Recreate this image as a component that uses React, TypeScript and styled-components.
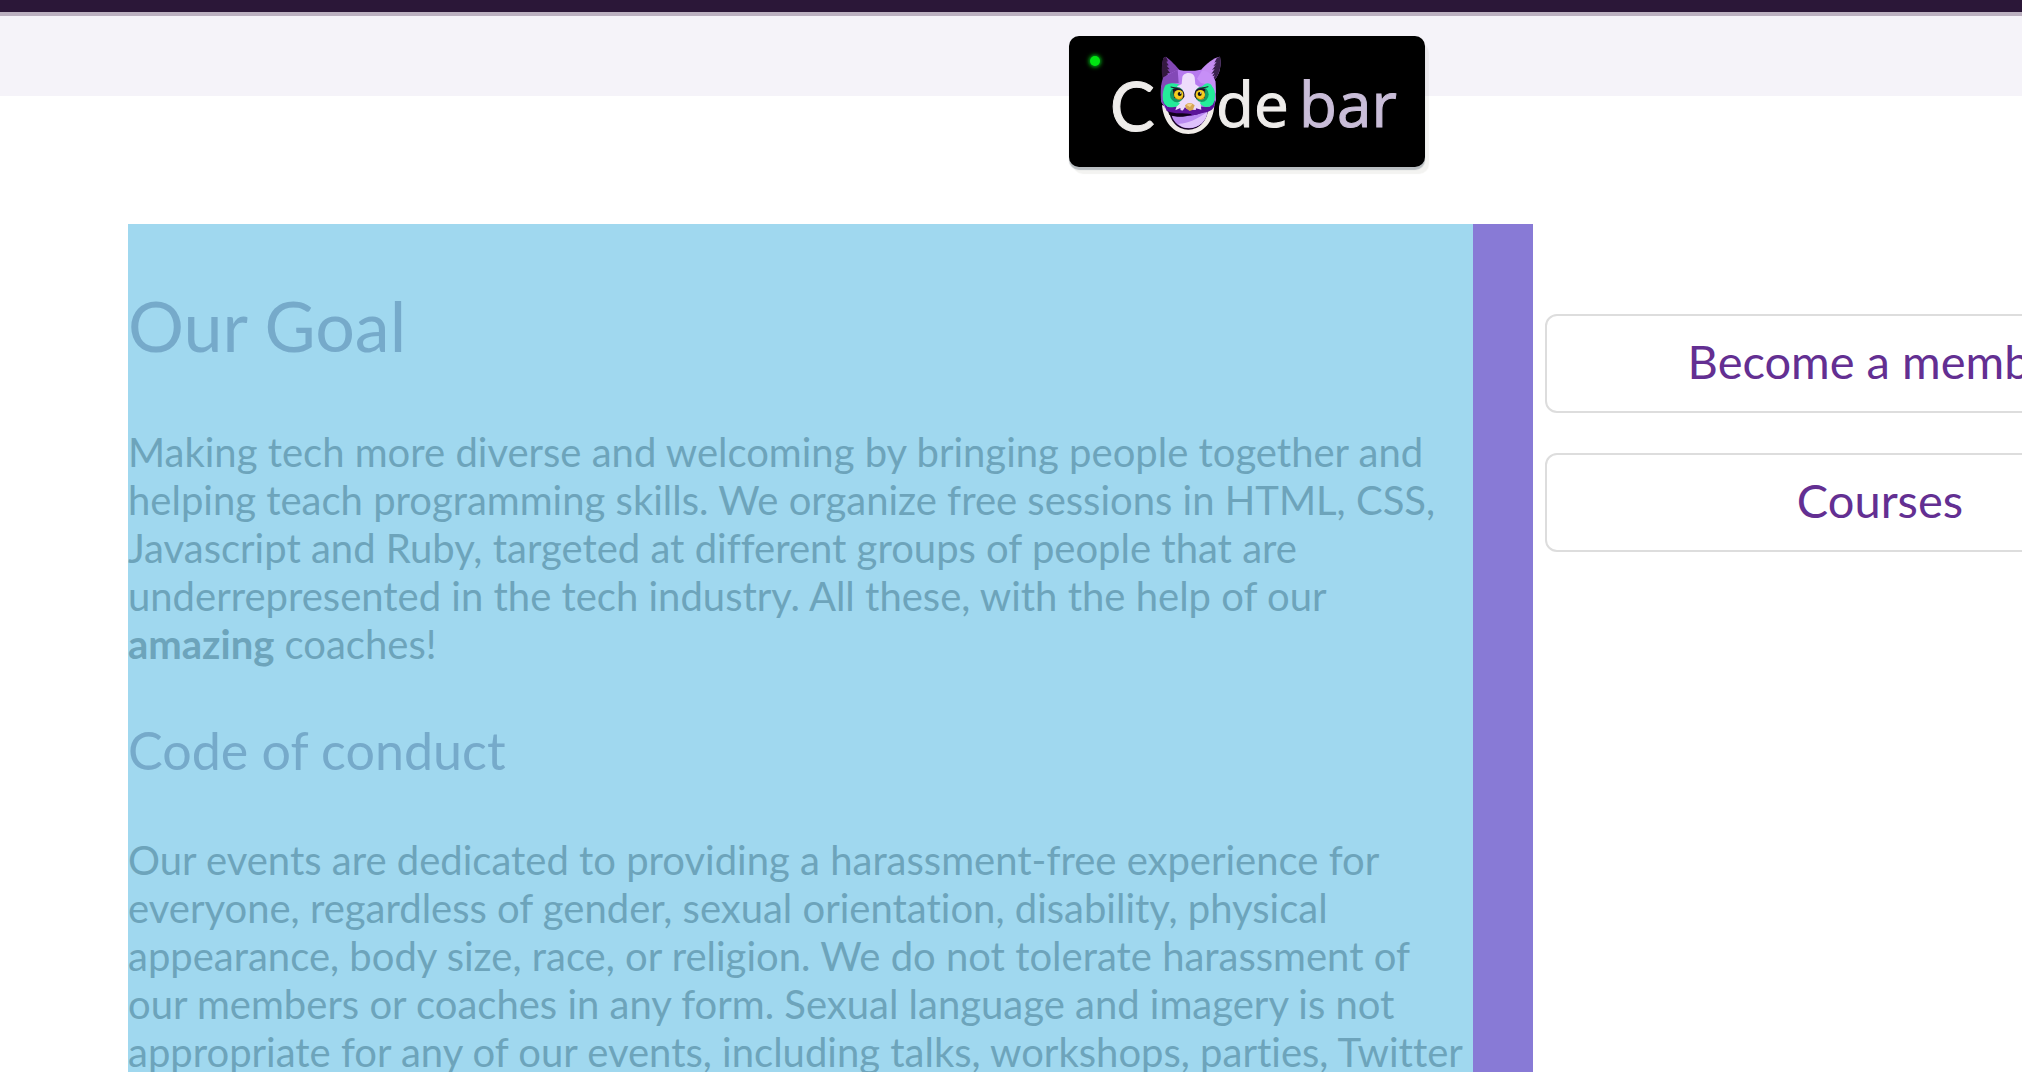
import React from "react";
import styled, { createGlobalStyle } from "styled-components";

const GlobalStyle = createGlobalStyle`
  *, *::before, *::after { box-sizing: border-box; }
  html, body { margin: 0; background: #ffffff; }
  body {
    overflow: hidden;
    font-family: Lato, "Open Sans", sans-serif;
    font-variant-ligatures: none;
  }
`;

const Page = styled.div`
  min-width: 2494px;
  height: 100vh;
  display: flex;
  flex-direction: column;
`;

const TopBar = styled.div`
  flex: none;
  height: 16px;
  background: #2b1738;
  border-bottom: 4px solid #bbb0c0;
`;

const Header = styled.header`
  height: 80px;
  flex: none;
  display: flex;
  justify-content: center;
  align-items: flex-start;
  padding-top: 20px;
  background: #f5f3f9;
`;

const LogoLink = styled.a`
  display: block;
  flex: none;
  border-radius: 10px;
  background: #000000;
  box-shadow: 0 3px 1px #b9bec2, 4px 7px 1px rgba(90, 80, 60, 0.07);

  svg { display: block; }
`;

const Content = styled.div`
  flex: 1;
  min-height: 0;
  display: flex;
  gap: 12px;
  padding: 128px 128px 0;
`;

const Goal = styled.main`
  flex: 0 0 1405px;
  padding: 60px 60px 0 0;
  background: linear-gradient(#887ad6, #887ad6) right / 60px 100% no-repeat #a0d8ef;
  overflow: hidden;
`;

const Title = styled.h1`
  margin: 0 0 62px;
  font-size: 70px;
  line-height: 82px;
  font-weight: 400;
  color: #76aaca;
`;

const Subtitle = styled.h2`
  margin: 52px 0 56px;
  font-size: 52px;
  line-height: 60px;
  font-weight: 400;
  color: #76aaca;
`;

const Copy = styled.p`
  margin: 0;
  font-size: 40px;
  line-height: 48px;
  color: #6da4bb;
`;

const Actions = styled.nav`
  flex: 0 1 670px;
  display: flex;
  flex-direction: column;
  gap: 40px;
  padding-top: 90px;
`;

const Action = styled.a`
  display: block;
  border: 2px solid #dddddd;
  border-radius: 12px;
  padding: 18px 20px 22px;
  font-size: 47px;
  line-height: 55px;
  text-align: center;
  text-decoration: none;
  color: #632f92;
`;

function Logo() {
  return (
    <svg width="356" height="131" viewBox="0 0 356 131" role="img" aria-label="Codebar">
      <defs>
        <filter id="glow" x="-100%" y="-100%" width="300%" height="300%">
          <feGaussianBlur stdDeviation="2" />
        </filter>
      </defs>
      <circle cx="26" cy="25" r="6" fill="#00c214" filter="url(#glow)" />
      <circle cx="26" cy="25" r="5" fill="#00e512" />
      <g fontFamily="'Open Sans', sans-serif" strokeWidth="1">
        <text x="41" y="95" fontSize="67" fontFamily="Lato, sans-serif" fill="#eeecea" stroke="#eeecea">C</text>
        <text x="147" y="91" fontSize="62" fill="#eeecea" stroke="#eeecea">de</text>
        <text x="230" y="91" fontSize="62" fill="#c9bdd8" stroke="#c9bdd8">bar</text>
      </g>
      <g transform="scale(0.33333) translate(-57 -108)">
        <path d="M336 315C340 365 370 402 415 402S491 365 493 315L474 325 358 325Z" fill="#f0ece8" />
        <path d="M357 325C357 360 380 389 415 389S472 360 475 325Z" fill="#170025" />
        <path d="M365 346C385 350 410 351 428 345C448 338 460 333 473 328C472 362 448 385 417 385C390 385 370 368 365 346Z" fill="#b98af0" />
        <path d="M385 371C412 372 440 358 472 336C470 364 446 383 417 384C401 384 391 379 385 371Z" fill="#dfc2fc" />
        <path d="M340 174L348 170C362 180 380 200 390 211L372 233L340 232C334 210 337 190 340 174Z" fill="#8247b4" />
        <path d="M340 174L348 170L354 184 349 185 356 196 350 197 359 208 352 208 360 219 352 219 357 231 348 230 338 238C333 210 336 190 340 174Z" fill="#34193f" />
        <path d="M452 211C467 192 492 172 510 170C514 196 511 219 493 240L462 239Z" fill="#c48bf2" />
        <path d="M501 173L510 170C514 196 511 219 493 241L488 236 495 226 486 230 493 218 484 222 494 207 486 210 497 196 490 199 500 185 493 188Z" fill="#39204d" />
        <path d="M384 209Q418 216 452 209L481 226 496 244 498 300 490 325 345 325 333 302 333 260 351 225 372 215Z" fill="#b77aef" />
        <path d="M340 232L383 209 386 249 362 252 341 274 342 318 334 307C330 277 333 248 340 232Z" fill="#8349b7" />
        <path d="M455 213C470 210 489 224 496 243L498 282 483 256 453 249 441 236Z" fill="#c78ff7" />
        <path d="M338 300L352 320H480L495 300L493 318C486 337 465 337 448 341C424 350 392 346 372 345L350 333Z" fill="#5b1399" />
        <path d="M397 232C400 215 431 214 434 232L436 253 454 265 467 302 452 312 454 329 438 325 437 332 392 332 391 324 376 331 382 313 359 303 373 264 395 252Z" fill="#eddcfb" />
        <path d="M368 250L387 253 378 263C358 274 355 295 377 303L390 309C386 317 377 322 367 322Q352 323 343 311Q337 300 338 284Q341 262 347 255Q358 249 368 250Z" fill="#24ec9a" />
        <path d="M466 251Q480 247 487 260Q496 270 495 288Q495 304 488 314Q477 323 465 321Q455 318 449 308L463 301C476 287 474 272 455 260Z" fill="#24ec9a" />
        <ellipse cx="381" cy="284" rx="21" ry="23" fill="#129a65" />
        <ellipse cx="455" cy="283" rx="21" ry="23" fill="#129a65" />
        <path d="M368 268C384 257 406 269 403 290L397 297 373 294Z" fill="#1c1428" />
        <path d="M466 268C449 258 430 269 434 290L441 297 464 294Z" fill="#1c1428" />
        <path d="M362 261L382 265M475 260L454 265" stroke="#1c1428" strokeWidth="3" />
        <circle cx="386" cy="284" r="14" fill="#f4cd1e" />
        <circle cx="451" cy="284" r="14" fill="#f4cd1e" />
        <path d="M373 288Q386 307 399 288L397 296Q386 303 376 295Z" fill="#d58b17" />
        <path d="M438 288Q451 307 464 288L462 296Q451 303 441 295Z" fill="#d58b17" />
        <circle cx="389" cy="282" r="6" fill="#151515" />
        <circle cx="449" cy="282" r="6" fill="#151515" />
        <circle cx="392" cy="279" r="2" fill="#fff" />
        <circle cx="452" cy="279" r="2" fill="#fff" />
        <path d="M372 332L387 329 398 332 405 322 413 328 436 330 459 331 475 325C475 334 462 337 448 341C424 350 392 346 372 345Z" fill="#5b1399" />
        <path d="M354 334C375 344 400 337 426 343C409 352 378 353 358 345Z" fill="#10001c" />
        <path d="M405 316Q419 302 434 316L429 329 419 333 408 325Z" fill="#d6a653" />
        <path d="M409 315Q418 307 427 313L420 321Z" fill="#f2d28e" />
      </g>
    </svg>
  );
}

export default function App() {
  return (
    <Page>
      <GlobalStyle />
      <TopBar />
      <Header>
        <LogoLink href="#">
          <Logo />
        </LogoLink>
      </Header>
      <Content>
        <Goal>
          <Title>Our Goal</Title>
          <Copy>
            Making tech more diverse and welcoming by bringing people together and helping teach
            programming skills. We organize free sessions in HTML, CSS, Javascript and Ruby,
            targeted at different groups of people that are underrepresented in the tech
            industry. All these, with the help of our <strong>amazing</strong> coaches!
          </Copy>
          <Subtitle>Code of conduct</Subtitle>
          <Copy>
            Our events are dedicated to providing a harassment-free experience for everyone,
            regardless of gender, sexual orientation, disability, physical appearance, body
            size, race, or religion. We do not tolerate harassment of our members or coaches in
            any form. Sexual language and imagery is not appropriate for any of our events,
            including talks, workshops, parties, Twitter
          </Copy>
        </Goal>
        <Actions>
          <Action href="#">Become a member</Action>
          <Action href="#">Courses</Action>
        </Actions>
      </Content>
    </Page>
  );
}
